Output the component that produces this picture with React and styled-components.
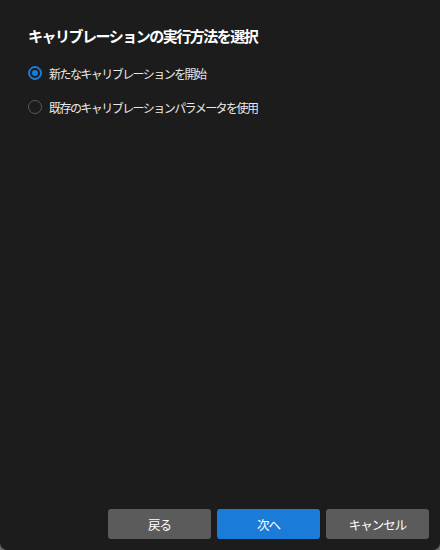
import React, { useState } from "react";
import styled, { createGlobalStyle } from "styled-components";

const Global = createGlobalStyle`
  html, body { margin: 0; padding: 0; background: #6a6a6a; }
  body { font-family: "Noto Sans CJK JP", "Noto Sans", sans-serif; }
`;

const Window = styled.div`
  width: 440px;
  height: 550px;
  box-sizing: border-box;
  background: #1c1c1c;
  border-radius: 0 0 7px 7px;
  display: flex;
  flex-direction: column;
  padding: 26px 11px 11px 28px;
`;

const Title = styled.h1`
  margin: 0;
  font-size: 15px;
  font-weight: 700;
  letter-spacing: -1.5px;
  line-height: 20px;
  color: #ffffff;
`;

const Options = styled.div`
  display: flex;
  flex-direction: column;
  gap: 14px;
  margin-top: 17px;
`;

const Option = styled.label`
  display: flex;
  align-items: center;
  gap: 7px;
  height: 20px;
  cursor: pointer;
  color: #e8e8e8;
  font-size: 12px;
  letter-spacing: -1.55px;
`;

const Radio = styled.span`
  box-sizing: border-box;
  width: 14px;
  height: 14px;
  border-radius: 50%;
  border: 1px solid ${(p) => (p.$checked ? "#1a7bd8" : "#585858")};
  background: ${(p) => (p.$checked ? "#1a7bd8" : "transparent")};
  display: flex;
  align-items: center;
  justify-content: center;
  flex: none;
  &::after {
    content: "";
    display: ${(p) => (p.$checked ? "block" : "none")};
    width: 6px;
    height: 6px;
    border-radius: 50%;
    background: #1a7bd8;
    box-shadow: 0 0 0 2px #1c1c1c;
  }
`;

const Spacer = styled.div`
  flex: 1;
`;

const Footer = styled.div`
  display: flex;
  justify-content: flex-end;
  gap: 6px;
`;

const Button = styled.button`
  width: 103px;
  height: 30px;
  border: none;
  border-radius: 3px;
  background: ${(p) => (p.$primary ? "#1a7bd8" : "#5b5b5b")};
  color: #ffffff;
  font-family: "Noto Sans CJK JP", "Noto Sans", sans-serif;
  font-size: 12.5px;
  letter-spacing: -1px;
  padding: 0;
  cursor: pointer;
`;

export default function App() {
  const [choice, setChoice] = useState(0);
  const opts = ["新たなキャリブレーションを開始", "既存のキャリブレーションパラメータを使用"];
  return (
    <>
      <Global />
      <Window>
        <Title>キャリブレーションの実行方法を選択</Title>
        <Options>
          {opts.map((o, i) => (
            <Option key={i} onClick={() => setChoice(i)}>
              <Radio $checked={choice === i} />
              {o}
            </Option>
          ))}
        </Options>
        <Spacer />
        <Footer>
          <Button>戻る</Button>
          <Button $primary>次へ</Button>
          <Button>キャンセル</Button>
        </Footer>
      </Window>
    </>
  );
}
